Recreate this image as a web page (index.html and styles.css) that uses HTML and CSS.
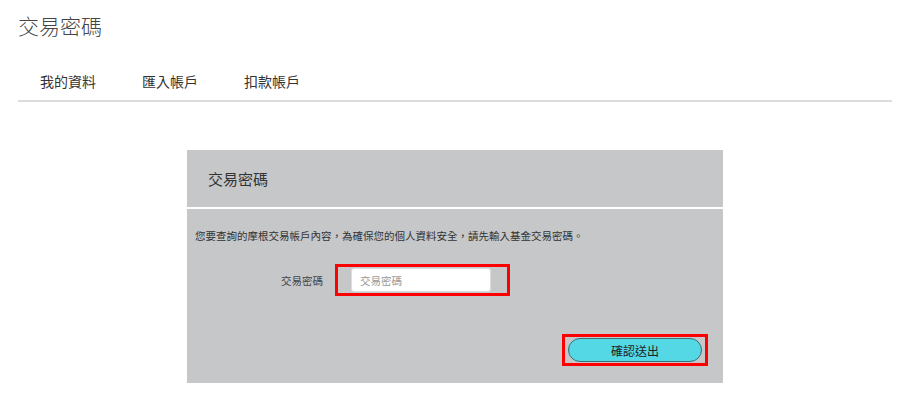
FILE: index.html
```html
<!DOCTYPE html>
<html lang="zh-Hant">
<head>
    <meta charset="UTF-8">
    <meta name="viewport" content="width=device-width, initial-scale=1.0">
    <title>交易密碼</title>
    <link rel="stylesheet" href="styles.css">
</head>
<body>
    <div class="page">
        <h1 class="page-title">交易密碼</h1>

        <nav class="tabs">
            <a class="tab" href="#">我的資料</a>
            <a class="tab" href="#">匯入帳戶</a>
            <a class="tab" href="#">扣款帳戶</a>
        </nav>

        <form class="panel" id="trade-password-form">
            <div class="panel-header">交易密碼</div>
            <div class="panel-body">
                <p class="notice">您要查詢的摩根交易帳戶內容，為確保您的個人資料安全，請先輸入基金交易密碼。</p>

                <div class="field">
                    <label class="field-label" for="password">交易密碼</label>
                    <div class="highlight field-box">
                        <input type="password" id="password" name="password" placeholder="交易密碼">
                    </div>
                </div>

                <div class="actions">
                    <div class="highlight action-box">
                        <button type="submit" class="submit">確認送出</button>
                    </div>
                </div>
            </div>
        </form>
    </div>
</body>
</html>
```

FILE: styles.css
```css
body {
    margin: 0;
    font-family: "Noto Sans CJK TC", "Noto Sans", sans-serif;
    color: #333;
    background: #fff;
}
.page {
    padding: 0 20px 0 18px;
}
.page-title {
    margin: 0;
    padding-top: 10px;
    font-size: 21px;
    font-weight: 300;
    line-height: 30px;
    color: #444;
}
.tabs {
    display: flex;
    gap: 46px;
    margin-top: 30px;
    padding: 0 0 8px 22px;
    border-bottom: 2px solid #dcdcdc;
}
.tab {
    font-size: 14px;
    line-height: 22px;
    color: #333;
    text-decoration: none;
}
.panel {
    width: 536px;
    margin: 48px auto 0;
    background: #c6c7c9;
}
.panel-header {
    height: 57px;
    padding-left: 21px;
    font-size: 15px;
    line-height: 57px;
    color: #333;
    border-bottom: 2px solid #fff;
}
.panel-body {
    padding: 19px 8px 17px;
}
.notice {
    margin: 0;
    font-size: 10.5px;
    line-height: 16px;
    color: #333;
}
.field {
    display: flex;
    align-items: center;
    margin-top: 20px;
}
.field-label {
    width: 128px;
    padding-right: 12px;
    text-align: right;
    font-size: 10.5px;
    color: #444;
}
.highlight {
    border: 3px solid #f00;
}
.field-box {
    padding: 1px 16px 1px 13px;
}
.field-box input {
    display: block;
    width: 140px;
    height: 24px;
    box-sizing: border-box;
    padding: 0 8px;
    border: 1px solid #ddd;
    border-radius: 3px;
    background: #fff;
    font-family: inherit;
    font-size: 10.5px;
    outline: none;
}
.field-box input::placeholder {
    color: #999;
}
.actions {
    display: flex;
    justify-content: flex-end;
    margin-top: 38px;
    padding-right: 7px;
}
.action-box {
    padding: 1px 3px 1px 3px;
}
.submit {
    display: block;
    width: 134px;
    height: 24px;
    border: 1px solid #3b6f76;
    border-radius: 12px;
    background: #55d8e6;
    color: #222;
    font-family: inherit;
    font-size: 12px;
    cursor: pointer;
}
```
